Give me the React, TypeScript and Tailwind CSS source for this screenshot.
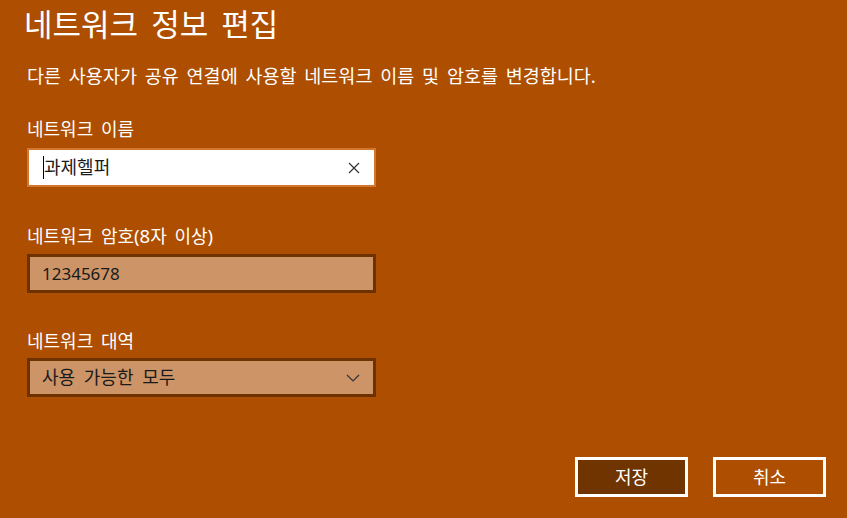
export default function App() {
  return (
    <div
      className="w-[847px] h-[518px] overflow-hidden bg-[#ad4e00] text-white pl-[27px] pr-[21px] flex flex-col"
      style={{ fontFamily: '"Noto Sans", "Noto Sans CJK KR", sans-serif' }}
    >
      <h1 className="h-[48px] leading-[48px] text-[31px] font-normal -ml-[3px] [word-spacing:5px]">
        네트워크 정보 편집
      </h1>

      <p className="mt-[16px] h-[24px] leading-[24px] text-[18.5px] [word-spacing:3px]">
        다른 사용자가 공유 연결에 사용할 네트워크 이름 및 암호를 변경합니다.
      </p>

      <div className="mt-[29px] h-[24px] leading-[24px] text-[18px] [word-spacing:3px]">네트워크 이름</div>
      <div className="mt-[7px] w-[349px] h-[39px] border-2 border-[#d3762f] bg-white flex items-center pl-[14px] pr-[14px]">
        <span className="w-px h-[23px] bg-black" />
        <span className="flex-1 text-[18px] text-[#1a1a1a]">과제헬퍼</span>
        <svg width="12" height="12" viewBox="0 0 12 12" className="text-[#333]">
          <path d="M1 1L11 11M11 1L1 11" stroke="currentColor" strokeWidth="1.2" fill="none" />
        </svg>
      </div>

      <div className="mt-[37px] h-[24px] leading-[24px] text-[18px] [word-spacing:3px]">
        네트워크 암호<span className="text-[18.5px]">(8</span>자 이상<span className="text-[18.5px]">)</span>
      </div>
      <div className="mt-[6px] w-[349px] h-[39px] border-[3px] border-[#6e3200] bg-[#cd9467] flex items-center pl-[12px]">
        <span className="text-[17px] text-[#1a1a1a]">12345678</span>
      </div>

      <div className="mt-[36px] h-[24px] leading-[24px] text-[18px] [word-spacing:3px]">네트워크 대역</div>
      <div className="mt-[5px] w-[349px] h-[39px] border-[3px] border-[#6e3200] bg-[#cd9467] flex items-center pl-[12px] pr-[13px]">
        <span className="flex-1 text-[18px] text-[#1a1a1a] [word-spacing:4px]">사용 가능한 모두</span>
        <svg width="14" height="8" viewBox="0 0 14 8" className="text-[#333]">
          <path d="M1 1L7 7L13 1" stroke="currentColor" strokeWidth="1.2" fill="none" />
        </svg>
      </div>

      <div className="mt-[60px] flex justify-end gap-[25px]">
        <button className="w-[113px] h-[40px] border-[3px] border-white bg-[#703400] text-white text-[18px]">
          저장
        </button>
        <button className="w-[113px] h-[40px] border-[3px] border-white bg-[#ad4e00] text-white text-[18px]">
          취소
        </button>
      </div>
    </div>
  );
}
